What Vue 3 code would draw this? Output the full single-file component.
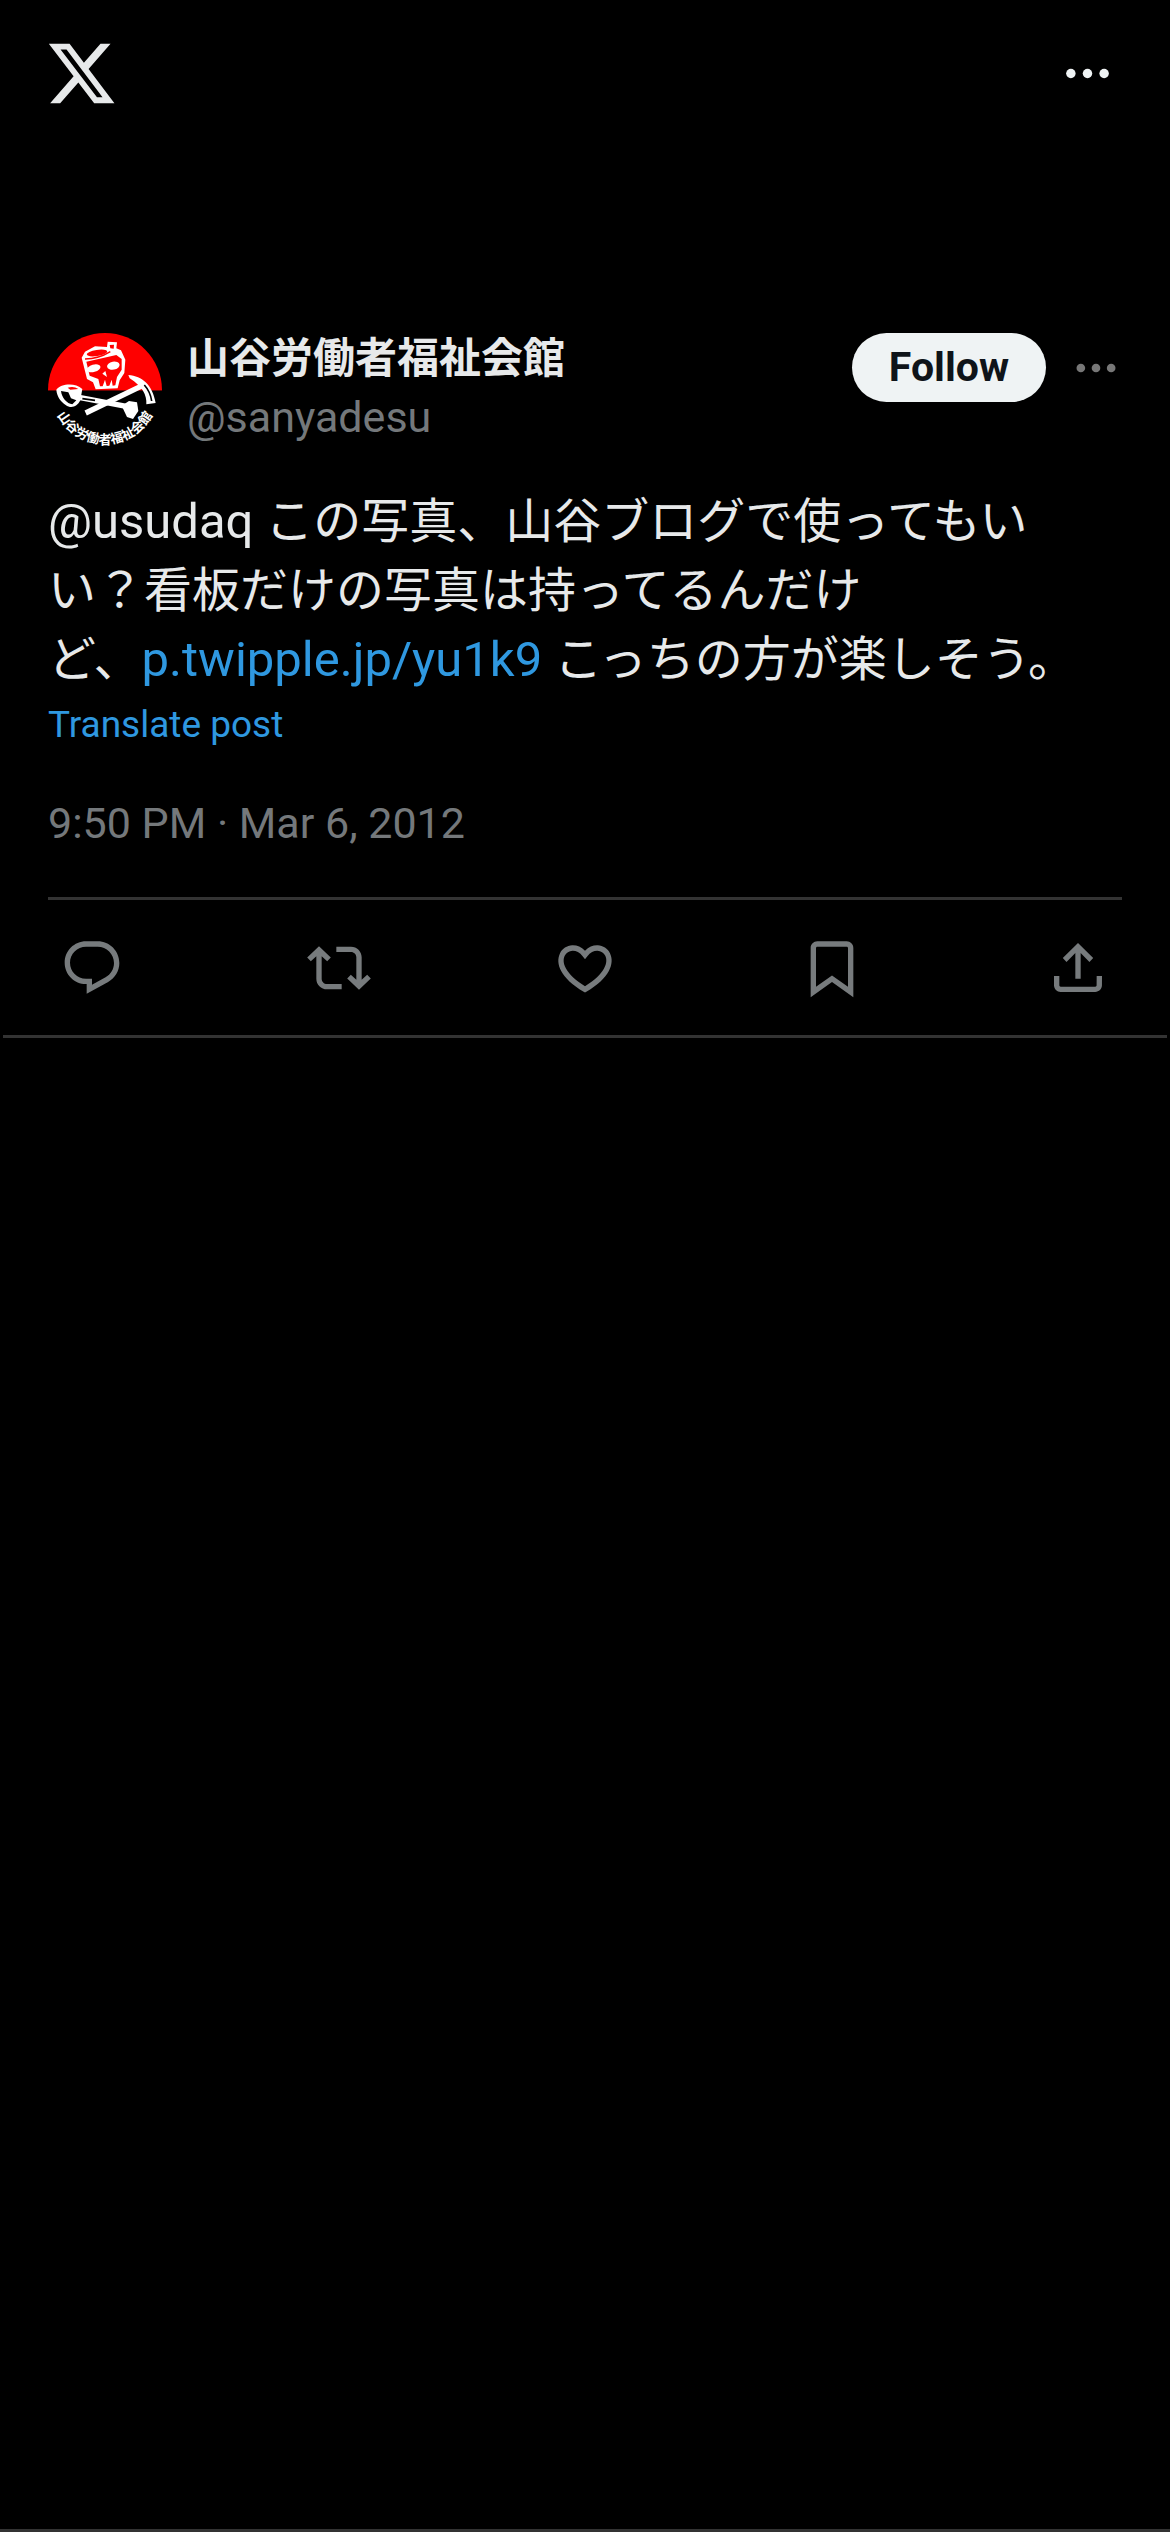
<script setup>
import { ref } from 'vue';

const post = {
  name: '山谷労働者福祉会館',
  handle: '@sanyadesu',
  mention: '@usudaq',
  time: '9:50 PM · Mar 6, 2012'
};

const following = ref(false);

// Action bar icons, 24x24 grid
const actions = [
  {
    label: 'Reply',
    path: 'M1.751 10c0-4.42 3.584-8 8.005-8h4.366c4.49 0 8.129 3.64 8.129 8.13 0 2.96-1.607 5.68-4.196 7.11l-8.054 4.46v-3.69h-.067c-4.49.1-8.183-3.51-8.183-8.01zm8.005-6c-3.317 0-6.005 2.69-6.005 6 0 3.37 2.77 6.08 6.138 6.01l.351-.01h1.761v2.3l5.087-2.81c1.951-1.08 3.163-3.13 3.163-5.36 0-3.39-2.744-6.13-6.129-6.13H9.756z'
  },
  {
    label: 'Repost',
    path: 'M4.5 3.88l4.432 4.14-1.364 1.46L5.5 7.55V16c0 1.1.896 2 2 2H13v2H7.5c-2.209 0-4-1.79-4-4V7.55L1.432 9.48.068 8.02 4.5 3.88zM16.5 6H11V4h5.5c2.209 0 4 1.79 4 4v8.45l2.068-1.93 1.364 1.46-4.432 4.14-4.432-4.14 1.364-1.46 2.068 1.93V8c0-1.1-.896-2-2-2z'
  },
  {
    label: 'Like',
    path: 'M16.697 5.5c-1.222-.06-2.679.51-3.89 2.16l-.805 1.09-.806-1.09C9.984 6.01 8.526 5.44 7.304 5.5c-1.243.07-2.349.78-2.91 1.91-.552 1.12-.633 2.78.479 4.82 1.074 1.97 3.257 4.27 7.129 6.61 3.87-2.34 6.052-4.64 7.126-6.61 1.111-2.04 1.03-3.7.477-4.82-.561-1.13-1.666-1.84-2.908-1.91zm4.187 7.69c-1.351 2.48-4.001 5.12-8.379 7.67l-.503.3-.504-.3c-4.379-2.55-7.029-5.19-8.382-7.67-1.36-2.5-1.41-4.86-.514-6.67.887-1.79 2.647-2.91 4.601-3.01 1.651-.09 3.368.56 4.798 2.01 1.429-1.45 3.146-2.1 4.796-2.01 1.954.1 3.714 1.22 4.601 3.01.896 1.81.846 4.17-.514 6.67z'
  },
  {
    label: 'Bookmark',
    path: 'M4 4.5C4 3.12 5.119 2 6.5 2h11C18.881 2 20 3.12 20 4.5v18.44l-8-5.71-8 5.71V4.5zM6.5 4c-.276 0-.5.22-.5.5v14.56l6-4.29 6 4.29V4.5c0-.28-.224-.5-.5-.5h-11z'
  },
  {
    label: 'Share',
    path: 'M12 2.59l5.7 5.7-1.41 1.42L13 6.41V16h-2V6.41l-3.3 3.3-1.41-1.42L12 2.59zM21 15l-.02 3.51c0 1.38-1.12 2.49-2.5 2.49H5.5C4.11 21 3 19.88 3 18.5V15h2v3.5c0 .28.22.5.5.5h12.98c.28 0 .5-.22.5-.5L19 15h2z'
  }
];
</script>

<template>
  <div class="page">
    <header class="topbar">
      <a class="topbar__logo" href="#" aria-label="X">
        <svg viewBox="0 0 24 24">
          <path d="M18.244 2.25h3.308l-7.227 8.26 8.502 11.24H16.17l-5.214-6.817L4.99 21.75H1.68l7.73-8.835L1.254 2.25H8.08l4.713 6.231zm-1.161 17.52h1.833L7.084 4.126H5.117z" />
        </svg>
      </a>
      <button class="topbar__more" type="button" aria-label="Menu">
        <svg viewBox="0 0 24 24">
          <circle cx="5" cy="12" r="2" />
          <circle cx="12" cy="12" r="2" />
          <circle cx="19" cy="12" r="2" />
        </svg>
      </button>
    </header>

    <main class="column">
      <article class="post">
        <div class="author">
          <a class="author__avatar" href="#" :aria-label="post.name">
            <svg viewBox="35 38 342 342">
              <defs>
                <clipPath id="avatar-clip"><circle cx="206" cy="209" r="171" /></clipPath>
                <path id="avatar-arc" d="M47 235 A161 161 0 0 0 365 235" />
              </defs>
              <g clip-path="url(#avatar-clip)">
                <rect x="35" y="38" width="342" height="173" fill="#fe0000" />
                <rect x="35" y="211" width="342" height="170" fill="#000" />
              </g>
              <!-- skull -->
              <path class="ink" d="M136 112 L146 152 L152 176 L170 186 L178 207 L244 204 L250 180 L264 158 L267 118 L254 90 L240 84 L242 66 L214 64 L212 80 L176 78 L146 94 Z" />
              <path class="red" d="M150 124 L240 104 L256 116 L256 148 L242 170 L237 195 L229 196 L226 178 L219 196 L211 197 L206 178 L199 198 L191 198 L186 176 L160 166 Z" />
              <ellipse class="red" cx="182" cy="98" rx="31" ry="9" transform="rotate(-9 182 98)" />
              <path class="red" d="M220 74 L233 73 L232 85 L222 84 Z" />
              <path class="red-line" d="M146 116 C180 116 206 104 222 94" />
              <ellipse class="ink" cx="172" cy="144" rx="21" ry="11" transform="rotate(-16 172 144)" />
              <ellipse class="ink" cx="231" cy="136" rx="19" ry="12" transform="rotate(-10 231 136)" />
              <path class="ink" d="M198 160 L207 152 L212 170 Z" />
              <!-- pickaxe -->
              <path class="ink-line" d="M148 278 L318 196" />
              <path class="ink" d="M276 164 C318 168 348 192 358 248 L330 252 C332 224 318 198 280 174 Z" />
              <path class="black-line" d="M324 194 Q342 214 346 242" />
              <!-- shovel -->
              <path class="ink-line" d="M132 232 L270 258" />
              <path class="black-line" d="M138 235 L176 240" />
              <path class="ink" d="M60 208 C74 190 116 186 138 206 L132 240 C122 260 104 266 88 254 C74 244 62 230 60 208 Z" />
              <path class="black-shape" d="M74 212 L96 216 L104 234 L120 240 L108 252 C92 250 76 232 74 212 Z" />
              <path class="red" d="M94 202 Q112 196 126 206 L102 208 Z" />
              <path class="ink" d="M256 256 L278 242 L302 246 L306 272 L290 296 L272 290 Z" />
              <text class="avatar-text">
                <textPath href="#avatar-arc" startOffset="50%" text-anchor="middle">山谷労働者福祉会館</textPath>
              </text>
            </svg>
          </a>
          <div class="author__names">
            <a class="author__name" href="#">{{ post.name }}</a>
            <a class="author__handle" href="#">{{ post.handle }}</a>
          </div>
          <button class="author__follow" type="button" @click="following = !following">
            {{ following ? 'Following' : 'Follow' }}
          </button>
          <button class="author__more" type="button" aria-label="More">
            <svg viewBox="0 0 24 24">
              <circle cx="5" cy="12" r="2" />
              <circle cx="12" cy="12" r="2" />
              <circle cx="19" cy="12" r="2" />
            </svg>
          </button>
        </div>

        <p class="post__text" lang="ja">
          <span class="post__mention">{{ post.mention }}</span> この写真、山谷ブログで使ってもいい？看板だけの写真は持ってるんだけ<span class="post__keep">ど、<a class="post__link" href="#">p.twipple.jp/yu1k9</a></span> こっちの方が楽しそう。
        </p>
        <button class="post__translate" type="button">Translate post</button>
        <a class="post__time" href="#">{{ post.time }}</a>

        <div class="actions">
          <button
            v-for="action in actions"
            :key="action.label"
            class="actions__item"
            type="button"
            :aria-label="action.label"
          >
            <svg viewBox="0 0 24 24"><path :d="action.path" /></svg>
          </button>
        </div>
      </article>
    </main>
  </div>
</template>

<style>
body {
  background: #000;
}
</style>

<style scoped>
.page {
  box-sizing: border-box;
  min-height: 100vh;
  border-bottom: 3px solid #333;
  background: #000;
  color: #e7e9ea;
  font-family: Roboto, "Noto Sans CJK JP", sans-serif;
}

.page a {
  color: inherit;
  text-decoration: none;
}

.page button {
  padding: 0;
  border: 0;
  background: none;
  color: inherit;
  font-family: inherit;
  cursor: pointer;
}

.page svg {
  display: block;
  width: 100%;
  height: 100%;
  fill: currentColor;
}

/* Top bar */
.topbar {
  display: flex;
  align-items: center;
  justify-content: space-between;
  height: 146px;
  padding: 0 54px 0 45px;
}

.topbar__logo {
  width: 73px;
  height: 73px;
}

.page .topbar__more {
  width: 57px;
  height: 57px;
  color: #eff3f4;
}

/* Post */
.column {
  margin: 0 3px;
  padding-top: 187px;
  border-bottom: 3px solid #333;
}

.post {
  display: flex;
  flex-direction: column;
  align-items: flex-start;
  padding: 0 45px;
}

.author {
  display: flex;
  align-items: flex-start;
  align-self: stretch;
}

.author__avatar {
  flex: none;
  width: 114px;
  height: 114px;
  margin-right: 25px;
}

.author__names {
  display: flex;
  flex: 1;
  flex-direction: column;
  min-width: 0;
}

.author__name {
  font-size: 42px;
  font-weight: 700;
  line-height: 52px;
}

.page .author__handle {
  color: #74787b;
  font-size: 43px;
  line-height: 64px;
}

.page .author__follow {
  height: 69px;
  padding: 0 37px;
  border-radius: 35px;
  background: #eff3f4;
  color: #0f1419;
  font-size: 41px;
  font-weight: 700;
  line-height: 69px;
}

.page .author__more {
  width: 52px;
  height: 52px;
  margin: 9px 0 0 24px;
  color: #777;
}

.post__text {
  margin: 38px 0 0;
  padding-right: 24px;
  font-size: 48px;
  line-height: 69px;
}

.post__mention,
.post__link {
  font-size: 49px;
}

.post__keep {
  white-space: nowrap;
}

.page .post__link,
.page .post__translate {
  color: #2f98e0;
}

.page .post__translate {
  font-size: 37px;
  line-height: 62px;
}

.page .post__time {
  margin-top: 43px;
  color: #74787b;
  font-size: 43px;
  line-height: 48px;
}

/* Action bar */
.actions {
  display: flex;
  align-items: center;
  align-self: stretch;
  justify-content: space-between;
  height: 135px;
  margin-top: 50px;
  padding: 0 12px;
  border-top: 3px solid #333;
  color: #777b7d;
}

.actions__item {
  width: 64px;
  height: 64px;
}

/* Avatar drawing */
.ink {
  fill: #fff;
}

.red {
  fill: #fe0000;
}

.black-shape {
  fill: #000;
}

.ink-line,
.red-line,
.black-line {
  fill: none;
  stroke: #fff;
  stroke-width: 16;
}

.red-line {
  stroke: #fe0000;
  stroke-width: 4;
}

.black-line {
  stroke: #000;
  stroke-width: 5;
}

.avatar-text {
  fill: #fff;
  font-family: "Noto Sans CJK JP", sans-serif;
  font-size: 39px;
  font-weight: 700;
}
</style>
